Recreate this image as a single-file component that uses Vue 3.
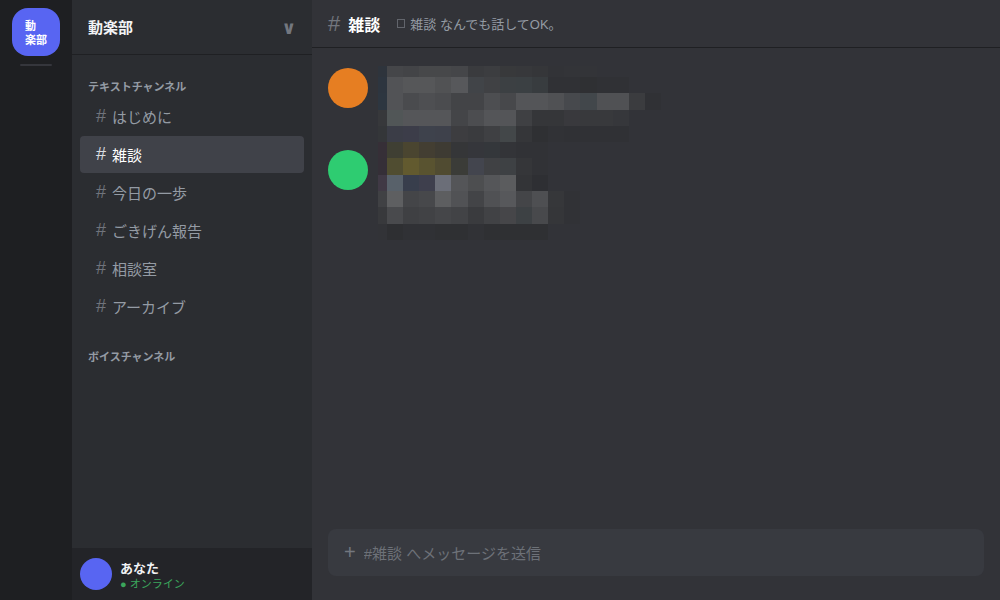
<script setup>
import { ref } from 'vue'

const channels = ['はじめに', '雑談', '今日の一歩', 'ごきげん報告', '相談室', 'アーカイブ']
const active = ref('雑談')
const draft = ref('')

// Pixelated message previews: one line per mosaic row, an empty tail is plain background.
const mosaic = [
  '2e343c 454649 434447 47484a 47484a 454649 3a3b3e 3c3d40 38393b 37383b 353639 323337 333438 333438',
  '2d353f 525356 565759 565759 515254 57585b 414448 404144 3c4043 3b4043 383c3f 303135 303135 2f3033 303135 303135',
  '2d3640 525356 4a4b4e 4e4f52 4b4c4f 434447 434447 4d4e51 47484b 545558 545558 505154 47494d 42474b 505154 505154 3b3c3f 303135',
  '37383b 515657 555659 555659 555659 444548 4c4d50 545558 545558 3f4043 353639 353639 39393d 38393c 38393c 36373b',
  '343639 3b3d47 3c3d49 3e424c 3e414b 3d3d40 3a3b3e 3f4043 434749 353639 2f3033 313236 303135 303135 303135 303135',
  '362f37 3f3f33 4a4530 433e32 3e3b33 353638 35363b 34373b 333438 313236 313236',
  '352f37 504d31 625a2f 595330 504b31 3b3c38 43454e 404144 3e4144 353639 313236',
  '403945 58616a 383e4c 3e3f4d 6b6e78 545558 4d4e50 555659 5b5c5e 333437 2e2f33',
  '404144 5e5f61 444548 47484b 5d5e60 515255 434447 505154 57585b 444548 4e4f52 36373a 313236',
  '38393c 494a4d 3f4043 414245 454649 424346 3a3b3e 414245 464649 3d4144 48494c 353639 313236',
  '323337 2e2f32 303135 303135 2f3033 2f3033 313236 2f3033 2f3033 2f3033 2f3033'
].flatMap(row => {
  const cells = row.split(' ')
  return Array.from({ length: 18 }, (_, i) => '#' + (cells[i] || '323338'))
})
</script>

<template>
  <div class="app">
    <nav class="servers" aria-label="サーバー">
      <button class="server" type="button">動<br>楽部</button>
      <div class="divider"></div>
    </nav>

    <aside class="sidebar">
      <header class="side-head">
        <h1>動楽部</h1>
        <span class="caret">∨</span>
      </header>
      <div class="channels">
        <h2>テキストチャンネル</h2>
        <button
          v-for="name in channels"
          :key="name"
          type="button"
          class="channel"
          :class="{ active: name === active }"
          @click="active = name"
        >
          <span class="hash">#</span><span>{{ name }}</span>
        </button>
        <h2 class="voice">ボイスチャンネル</h2>
      </div>
      <footer class="user">
        <div class="avatar small"></div>
        <div>
          <div class="name">あなた</div>
          <div class="status">● オンライン</div>
        </div>
      </footer>
    </aside>

    <main class="main">
      <header class="main-head">
        <span class="big-hash">#</span>
        <h2>雑談</h2>
        <p class="topic"><span class="box"></span>雑談 なんでも話してOK。</p>
      </header>
      <section class="messages">
        <div class="avatars">
          <div class="avatar orange"></div>
          <div class="avatar green"></div>
        </div>
        <div class="mosaic">
          <i v-for="(color, i) in mosaic" :key="i" :style="{ background: color }"></i>
        </div>
      </section>
      <form class="composer" @submit.prevent>
        <button class="plus" type="button" aria-label="追加">+</button>
        <input v-model="draft" type="text" placeholder="#雑談 へメッセージを送信" aria-label="#雑談 へメッセージを送信">
      </form>
    </main>
  </div>
</template>

<style>
body {
  background: #323338;
}
</style>

<style scoped>
.app {
  display: flex;
  min-height: 100vh;
  font-family: "Liberation Sans", "Noto Sans CJK JP", sans-serif;
  color: #949ba4;
  background: #323338;
}
h1, h2, p {
  margin: 0;
}
button, input {
  font-family: inherit;
  border: 0;
  padding: 0;
  background: none;
}
.servers {
  width: 72px;
  flex: none;
  background: #1e1f22;
  display: flex;
  flex-direction: column;
  align-items: center;
  padding-top: 8px;
  gap: 8px;
  box-sizing: border-box;
}
.server {
  width: 48px;
  height: 48px;
  border-radius: 16px;
  background: #5865f2;
  color: #fff;
  font-size: 11px;
  line-height: 14px;
  font-weight: 700;
  text-align: left;
  padding: 2px 0 0 13px;
}
.divider {
  width: 32px;
  height: 2px;
  border-radius: 1px;
  background: #35363c;
}
.sidebar {
  width: 240px;
  flex: none;
  background: #2b2d31;
  display: flex;
  flex-direction: column;
}
.side-head {
  display: flex;
  align-items: center;
  justify-content: space-between;
  padding: 16px 16px 14px;
  border-bottom: 1px solid #1f2023;
}
.side-head h1 {
  font-size: 15px;
  line-height: 24px;
  color: #f2f3f5;
}
.caret {
  font-family: "DejaVu Sans", sans-serif;
  font-size: 18px;
  line-height: 24px;
  font-weight: 700;
  color: #73777f;
}
.channels {
  flex: 1;
  padding: 24px 8px 0;
}
.channels h2 {
  font-size: 11px;
  line-height: 16px;
  padding: 0 8px;
  margin-bottom: 3px;
  color: #949ba4;
}
.channels .voice {
  margin-top: 24px;
}
.channel {
  display: flex;
  align-items: center;
  gap: 6px;
  width: 100%;
  height: 37px;
  margin-bottom: 1px;
  padding: 0 16px;
  border-radius: 4px;
  font-size: 15px;
  color: #949ba4;
}
.channel.active {
  background: #404249;
  color: #fff;
}
.hash {
  font-size: 18px;
  line-height: 22px;
  padding-bottom: 2px;
  color: #70747c;
}
.active .hash {
  color: #dbdee1;
}
.user {
  display: flex;
  align-items: center;
  gap: 8px;
  padding: 10px 8px;
  background: #232428;
}
.avatar {
  width: 40px;
  height: 40px;
  border-radius: 50%;
}
.avatar.small {
  width: 32px;
  height: 32px;
  background: #5865f2;
}
.orange {
  background: #e67e22;
}
.green {
  background: #2ecc71;
}
.name {
  font-size: 13px;
  line-height: 18px;
  padding-top: 1px;
  font-weight: 700;
  color: #f2f3f5;
}
.status {
  font-size: 11px;
  line-height: 12px;
  color: #3ba55c;
}
.main {
  flex: 1;
  min-width: 0;
  display: flex;
  flex-direction: column;
}
.main-head {
  display: flex;
  align-items: center;
  height: 47px;
  padding: 0 16px;
  border-bottom: 1px solid #1f2023;
}
.big-hash {
  font-size: 22px;
  color: #72767e;
}
.main-head h2 {
  margin-left: 8px;
  font-size: 16px;
  color: #fff;
}
.topic {
  display: flex;
  align-items: center;
  margin-left: 17px;
  font-size: 13px;
}
.box {
  width: 6px;
  height: 7px;
  margin-right: 5px;
  border: 1px solid #62656c;
}
.messages {
  flex: 1;
  display: flex;
  align-items: flex-start;
  gap: 10px;
  padding: 18px 16px;
}
.avatars {
  display: grid;
  gap: 42px;
  padding-top: 2px;
}
.mosaic {
  display: grid;
  width: 283px;
  height: 174px;
  grid-template-columns: 9px repeat(17, 1fr);
  grid-template-rows: 11px repeat(10, 1fr);
}
.composer {
  display: flex;
  align-items: center;
  gap: 8px;
  height: 47px;
  margin: 0 16px 24px;
  padding: 0 16px;
  border-radius: 8px;
  background: #383a40;
}
.plus {
  font-size: 20px;
  line-height: 24px;
  padding-bottom: 2px;
  color: #73777f;
}
.composer input {
  flex: 1;
  min-width: 0;
  outline: 0;
  font-size: 15px;
  line-height: 22px;
  padding-top: 2px;
  color: #dbdee1;
}
.composer input::placeholder {
  color: #6d7178;
  opacity: 1;
}
</style>
